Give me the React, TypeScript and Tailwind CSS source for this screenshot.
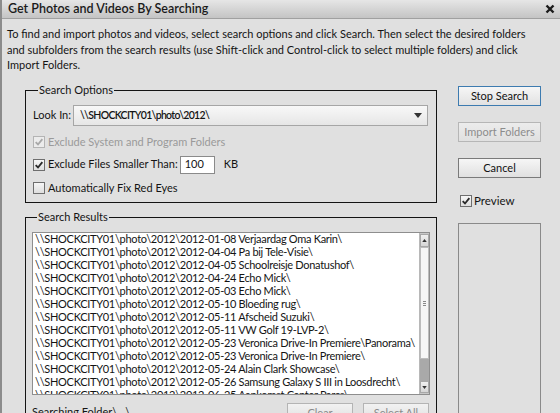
import React from "react";

const items = [
  "2012-01-08 Verjaardag Oma Karin\\",
  "2012-04-04 Pa bij Tele-Visie\\",
  "2012-04-05 Schoolreisje Donatushof\\",
  "2012-04-24 Echo Mick\\",
  "2012-05-03 Echo Mick\\",
  "2012-05-10 Bloeding rug\\",
  "2012-05-11 Afscheid Suzuki\\",
  "2012-05-11 VW Golf 19-LVP-2\\",
  "2012-05-23 Veronica Drive-In Premiere\\Panorama\\",
  "2012-05-23 Veronica Drive-In Premiere\\",
  "2012-05-24 Alain Clark Showcase\\",
  "2012-05-26 Samsung Galaxy S III in Loosdrecht\\",
  "2012-06-25 Aankomst Center Parcs\\",
];

const PREFIX = "\\\\SHOCKCITY01\\photo\\2012\\";

function Check({ checked, disabled }: { checked?: boolean; disabled?: boolean }) {
  return (
    <span
      className={
        disabled
          ? "w-[12px] h-[12px] shrink-0 border border-[#b4b4b4] bg-[#ececec] flex items-center justify-center"
          : "w-[12px] h-[12px] shrink-0 border border-[#6e6e6e] bg-gradient-to-b from-[#f6f6f6] to-[#dedede] flex items-center justify-center"
      }
    >
      {checked && (
        <svg viewBox="0 0 12 12" className="w-[10px] h-[10px]">
          <path
            d="M2 6.2 L4.8 9 L10 2.5"
            stroke={disabled ? "#a8a8a8" : "#2a2a2a"}
            strokeWidth="2.2"
            fill="none"
          />
        </svg>
      )}
    </span>
  );
}

export default function App() {
  return (
    <div className="w-[560px] h-[413px] overflow-hidden bg-[#e0e0e0] border-l-2 border-[#8c8c8c] flex flex-col font-['Lato','Open_Sans',sans-serif] text-[11px] text-[#141414]">
      {/* Title bar */}
      <div className="h-[19px] shrink-0 bg-gradient-to-b from-[#e6e6e6] to-[#c4c4c4] border-b border-[#a0a0a0] flex items-center justify-between pl-[6px] pr-[5px]">
        <span className="text-[12.5px] font-semibold text-[#1a1a1a]">Get Photos and Videos By Searching</span>
        <svg viewBox="0 0 10 10" className="w-[10px] h-[10px]">
          <path d="M1.5 1.5 L8.5 8.5 M8.5 1.5 L1.5 8.5" stroke="#1a1a1a" strokeWidth="2.4" />
        </svg>
      </div>

      {/* Description */}
      <div className="mt-[7px] h-[50px] shrink-0 pl-[5px] leading-[15.5px]">
        To find and import photos and videos, select search options and click Search. Then select the desired folders
        <br />
        and subfolders from the search results (use Shift-click and Control-click to select multiple folders) and click
        <br />
        Import Folders.
      </div>

      {/* Main */}
      <div className="flex items-start">
        {/* Left column */}
        <div className="ml-[23px] w-[412px] shrink-0 flex flex-col">
          <fieldset className="mt-[7px] min-w-0 border border-[#141414] pt-[8px] pl-[7px] pr-[8px] pb-[6px]">
            <legend className="ml-[5px] px-[1px] leading-[14px]">Search Options</legend>
            <div className="flex items-center h-[21px]">
              <span className="w-[40px] shrink-0">Look In:</span>
              <div className="flex-1 min-w-0 h-[21px] border border-[#a6a6a6] bg-gradient-to-b from-[#f8f8f8] to-[#e6e6e6] flex items-center justify-between pl-[6px] pr-[5px]">
                <span className="text-[10.5px] tracking-[-0.7px] font-semibold">{PREFIX}</span>
                <svg viewBox="0 0 8 5" className="w-[8px] h-[5px]">
                  <path d="M0 0 H8 L4 5 Z" fill="#333" />
                </svg>
              </div>
            </div>
            <div className="mt-[8px] h-[16px] flex items-center gap-[2px] text-[#9a9a9a]">
              <Check checked disabled />
              <span className="ml-[1px]">Exclude System and Program Folders</span>
            </div>
            <div className="mt-[5px] h-[19px] flex items-center gap-[2px]">
              <Check checked />
              <span className="ml-[1px]">Exclude Files Smaller Than:</span>
              <div className="w-[35px] h-[18px] bg-white border border-[#8a8a8a] flex items-center pl-[4px]">100</div>
              <span className="ml-[7px]">KB</span>
            </div>
            <div className="mt-[6px] h-[16px] flex items-center gap-[2px]">
              <Check />
              <span className="ml-[1px]">Automatically Fix Red Eyes</span>
            </div>
          </fieldset>

          <fieldset className="mt-[7px] min-w-0 border border-[#141414] pt-[8px] px-[6px] pb-[6px]">
            <legend className="ml-[5px] px-[1px] leading-[14px]">Search Results</legend>
            <div className="h-[163px] min-w-0 border border-[#8e8e8e] bg-white flex overflow-hidden">
              <div className="flex-1 min-w-0 overflow-hidden pl-[2px] leading-[13px] whitespace-nowrap tracking-[-0.3px]">
                <div className="-mt-[1px]">
                  {items.map((it) => (
                    <div key={it}>
                      {PREFIX}
                      {it}
                    </div>
                  ))}
                </div>
              </div>
              <div className="w-[10px] shrink-0 flex flex-col bg-[#c8c8c8] border-l border-[#b8b8b8] py-[1px]">
                <div className="h-[13px] bg-gradient-to-b from-[#f0f0f0] to-[#d6d6d6] border border-[#a8a8a8] flex items-center justify-center">
                  <svg viewBox="0 0 6 4" className="w-[5px] h-[3px]">
                    <path d="M0 4 H6 L3 0 Z" fill="#333" />
                  </svg>
                </div>
                <div className="h-[112px] bg-[#f6f6f6] border border-[#bcbcbc] flex items-center justify-center">
                  <div className="flex flex-col gap-[1px]">
                    <div className="w-[3px] h-[1px] bg-[#8a8a8a]" />
                    <div className="w-[3px] h-[1px] bg-[#8a8a8a]" />
                    <div className="w-[3px] h-[1px] bg-[#8a8a8a]" />
                  </div>
                </div>
                <div className="flex-1 bg-[#a9a9a9]" />
                <div className="h-[12px] bg-gradient-to-b from-[#f0f0f0] to-[#d6d6d6] border border-[#a8a8a8] flex items-center justify-center">
                  <svg viewBox="0 0 6 4" className="w-[5px] h-[3px]">
                    <path d="M0 0 H6 L3 4 Z" fill="#333" />
                  </svg>
                </div>
              </div>
            </div>
            <div className="mt-[8px] flex items-start">
              <span className="flex-1 pt-[1px]">Searching Folder\ ..\</span>
              <div className="w-[66px] h-[20px] border border-[#b4b4b4] bg-gradient-to-b from-[#f2f2f2] to-[#dedede] text-[#8a8a8a] flex items-center justify-center">Clear</div>
              <div className="ml-[10px] mr-[1px] w-[66px] h-[20px] border border-[#b4b4b4] bg-gradient-to-b from-[#f2f2f2] to-[#dedede] text-[#8a8a8a] flex items-center justify-center">Select All</div>
            </div>
          </fieldset>
        </div>

        {/* Right column */}
        <div className="ml-[21px] w-[83px] shrink-0 mt-[10px] flex flex-col">
          <div className="h-[20px] border border-[#3d7bb0] bg-gradient-to-b from-[#f6f6f6] to-[#e2e2e2] flex items-center justify-center text-[#111]">Stop Search</div>
          <div className="mt-[16px] h-[20px] border border-[#b6b6b6] bg-gradient-to-b from-[#ececec] to-[#e0e0e0] flex items-center justify-center text-[#8c8c8c]">Import Folders</div>
          <div className="mt-[16px] h-[20px] border border-[#7a7a7a] bg-gradient-to-b from-[#f6f6f6] to-[#e0e0e0] flex items-center justify-center text-[#111]">Cancel</div>
          <div className="mt-[16px] h-[14px] flex items-center gap-[2px] pl-[2px]">
            <Check checked />
            <span className="text-[11.5px]">Preview</span>
          </div>
          <div className="mt-[15px] h-[200px] border border-[#8a8a8a] bg-[#e0e0e0]" />
        </div>
      </div>
    </div>
  );
}
